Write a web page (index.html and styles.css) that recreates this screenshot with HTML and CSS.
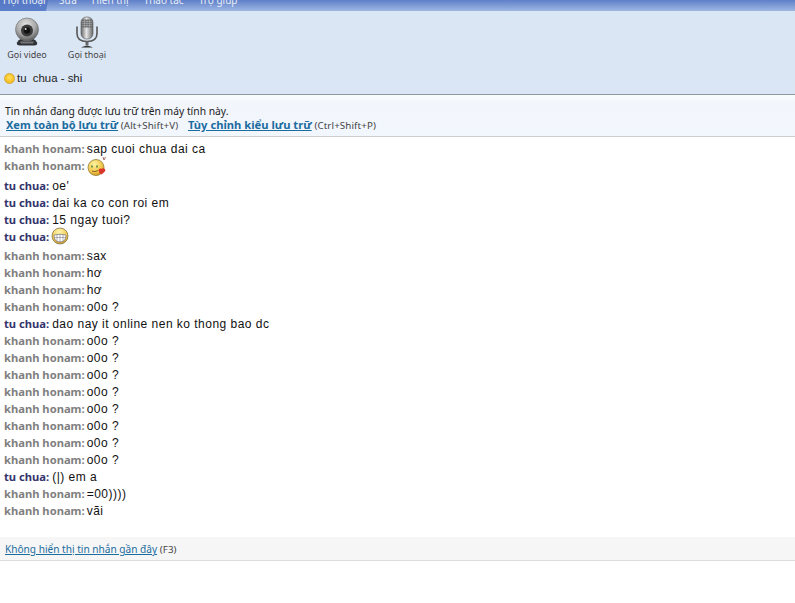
FILE: index.html
```html
<!DOCTYPE html>
<html lang="vi">
<head>
<meta charset="utf-8">
<title>Hội thoại</title>
<link rel="stylesheet" href="styles.css">
</head>
<body>
<nav class="menu">
  <span class="menu-item active">Hội thoại</span>
  <span class="menu-item">Sửa</span>
  <span class="menu-item">Hiển thị</span>
  <span class="menu-item">Thao tác</span>
  <span class="menu-item">Trợ giúp</span>
</nav>
<header class="toolbar">
  <div class="tools">
    <div class="tool tool-video">
      <svg class="tool-icon" width="30" height="32" viewBox="0 0 30 32">
        <defs>
          <radialGradient id="cam" cx="45%" cy="30%" r="70%"><stop offset="0" stop-color="#e4e4e4"/><stop offset="0.6" stop-color="#a8a8a8"/><stop offset="1" stop-color="#5c5c5c"/></radialGradient>
        </defs>
        <path d="M5 26 Q8 21 15 21 Q22 21 25 26 Q26 29 22 29 L8 29 Q4 29 5 26Z" fill="#2f3336"/>
        <path d="M8 25 L22 25 L21 27 L9 27Z" fill="#777"/>
        <circle cx="15" cy="13" r="11.5" fill="url(#cam)" stroke="#6d6d6d" stroke-width=".6"/>
        <circle cx="15" cy="14" r="6" fill="#3a3a3a"/>
        <circle cx="15" cy="14" r="3.2" fill="#111"/>
        <circle cx="13.6" cy="12.6" r="1" fill="#ddd"/>
      </svg>
      <span>Gọi video</span>
    </div>
    <div class="tool tool-voice">
      <svg class="tool-icon" width="24" height="32" viewBox="0 0 24 32">
        <defs>
          <linearGradient id="mic" x1="0" x2="1" y1="0" y2="0"><stop offset="0" stop-color="#666"/><stop offset=".45" stop-color="#e6e6e6"/><stop offset="1" stop-color="#666"/></linearGradient>
        </defs>
        <path d="M2 10 L2 17 Q2 25 12 25 Q22 25 22 17 L22 10" fill="none" stroke="#555" stroke-width="1.6"/>
        <rect x="6" y="0.500" width="12" height="22" rx="5.5" fill="url(#mic)" stroke="#555" stroke-width=".6"/>
        <rect x="7" y="3" width="10" height="8" fill="#6c6e70"/>
        <path d="M7 5 H17 M7 7 H17 M7 9 H17 M9.500 3 V11 M12 3 V11 M14.500 3 V11" stroke="#b4b4b4" stroke-width=".5"/>
        <rect x="10.500" y="25" width="3" height="4" fill="#666"/>
        <path d="M6 31 Q12 27.500 18 31 Z" fill="#333"/>
      </svg>
      <span>Gọi thoại</span>
    </div>
  </div>
  <div class="contact">
    <span class="status-dot"></span>
    <span>tu&nbsp; chua - shi</span>
  </div>
</header>
<section class="notice">
  <p class="notice-line">Tin nhắn đang được lưu trữ trên máy tính này.</p>
  <p class="notice-links">
    <a class="strong-link" href="#">Xem toàn bộ lưu trữ</a> <span class="hint">(Alt+Shift+V)</span>
    <a class="strong-link second" href="#">Tùy chỉnh kiểu lưu trữ</a> <span class="hint">(Ctrl+Shift+P)</span>
  </p>
</section>
<main class="log">
  <div class="msg"><b class="me">khanh honam:</b> <span>sap cuoi chua dai ca</span></div>
  <div class="msg tall-a"><b class="me">khanh honam:</b>
    <svg class="emo" width="20" height="21" viewBox="0 0 20 21">
      <defs><radialGradient id="face" cx="40%" cy="30%" r="70%"><stop offset="0" stop-color="#fdf3a0"/><stop offset=".7" stop-color="#f2c64a"/><stop offset="1" stop-color="#d49a22"/></radialGradient></defs>
      <circle cx="9" cy="11.500" r="8" fill="url(#face)" stroke="#8f7a3a" stroke-width=".8"/>
      <path d="M5 9.500 v2 M10 9.500 v2" stroke="#3d7a2e" stroke-width="1.4"/>
      <path d="M5 15 Q8 16.500 11 14.500" fill="none" stroke="#6b4a1a" stroke-width=".8"/>
      <path d="M11.500 14.500 Q12 11.500 14.500 12.800 Q17.500 11.500 18.500 14 Q18 16.500 14.500 18.500 Q11.500 16.500 11.500 14.500Z" fill="#d9362b"/>
      <path d="M16 1 L17 4 L18.500 1" fill="none" stroke="#8a3a2a" stroke-width=".7"/>
    </svg>
  </div>
  <div class="msg"><b class="you">tu chua:</b> <span>oe'</span></div>
  <div class="msg"><b class="you">tu chua:</b> <span>dai ka co con roi em</span></div>
  <div class="msg"><b class="you">tu chua:</b> <span>15 ngay tuoi?</span></div>
  <div class="msg tall-b"><b class="you">tu chua:</b>
    <svg class="emo" width="18" height="18" viewBox="0 0 18 18">
      <defs><radialGradient id="face2" cx="45%" cy="25%" r="75%"><stop offset="0" stop-color="#fdf5b0"/><stop offset=".7" stop-color="#f0c850"/><stop offset="1" stop-color="#cfa030"/></radialGradient></defs>
      <circle cx="9" cy="9" r="8" fill="url(#face2)" stroke="#85764a" stroke-width=".8"/>
      <path d="M3 8 Q9 6.500 15 8 Q15 15 9 15 Q3 15 3 8Z" fill="#fff" stroke="#5a5a6a" stroke-width=".6"/>
      <path d="M3.500 10.500 H14.500 M6 7.500 V14.500 M9 7.200 V15 M12 7.500 V14.500" stroke="#6a6a7a" stroke-width=".5"/>
    </svg>
  </div>
  <div class="msg"><b class="me">khanh honam:</b> <span>sax</span></div>
  <div class="msg"><b class="me">khanh honam:</b> <span>hơ</span></div>
  <div class="msg"><b class="me">khanh honam:</b> <span>hơ</span></div>
  <div class="msg"><b class="me">khanh honam:</b> <span>o0o ?</span></div>
  <div class="msg"><b class="you">tu chua:</b> <span>dao nay it online nen ko thong bao dc</span></div>
  <div class="msg"><b class="me">khanh honam:</b> <span>o0o ?</span></div>
  <div class="msg"><b class="me">khanh honam:</b> <span>o0o ?</span></div>
  <div class="msg"><b class="me">khanh honam:</b> <span>o0o ?</span></div>
  <div class="msg"><b class="me">khanh honam:</b> <span>o0o ?</span></div>
  <div class="msg"><b class="me">khanh honam:</b> <span>o0o ?</span></div>
  <div class="msg"><b class="me">khanh honam:</b> <span>o0o ?</span></div>
  <div class="msg"><b class="me">khanh honam:</b> <span>o0o ?</span></div>
  <div class="msg"><b class="me">khanh honam:</b> <span>o0o ?</span></div>
  <div class="msg"><b class="you">tu chua:</b> <span>(|) em a</span></div>
  <div class="msg"><b class="me">khanh honam:</b> <span>=00))))</span></div>
  <div class="msg"><b class="me">khanh honam:</b> <span>vãi</span></div>
</main>
<footer class="recent">
  <a class="plain-link" href="#">Không hiển thị tin nhắn gần đây</a> <span class="hint">(F3)</span>
</footer>
</body>
</html>
```
FILE: styles.css
```css
* { box-sizing: border-box; }
html, body { margin: 0; padding: 0; }
body {
  width: 795px;
  height: 603px;
  overflow: hidden;
  background: #fff;
  font-family: "DejaVu Sans", sans-serif;
  font-size: 10px;
  color: #222;
}
p { margin: 0; }

.menu {
  height: 11px;
  display: flex;
  align-items: flex-end;
  overflow: hidden;
  background: linear-gradient(#5f7fc9, #9db7e2);
  font-family: "Noto Sans", sans-serif;
  font-size: 10px;
  color: #e6edf8;
}
.menu-item {
  flex: none;
  line-height: 16px;
  padding: 0 0 3px 0;
  margin-right: 15px;
}
.menu-item.active {
  width: 50px;
  height: 19px;
  padding: 0 0 3px 3px;
  margin-right: 9px;
  background: linear-gradient(#4e6fbe, #5d80cb);
  clip-path: polygon(0 0, 100% 0, 92% 100%, 0 100%);
}

.toolbar {
  height: 84px;
  background: linear-gradient(#d8e7f3 0, #dbe6f4 12px, #dae6f5 100%);
  border-bottom: 1px solid #8c9a9c;
  padding-top: 5px;
}
.tools { display: flex; height: 49px; }
.tool {
  display: flex;
  flex-direction: column;
  align-items: center;
  font-family: "Noto Sans", sans-serif;
  font-size: 9px;
  line-height: 12px;
  color: #444;
}
.tool-icon { display: block; height: 33px; }
.tool-video { width: 54px; }
.tool-voice { width: 66px; }
.contact {
  display: flex;
  align-items: center;
  gap: 2px;
  padding: 6px 0 0 4px;
  font-family: "Liberation Sans", sans-serif;
  font-size: 11.4px;
  line-height: 15px;
  color: #222;
}
.status-dot {
  width: 11px;
  height: 11px;
  border-radius: 50%;
  background: radial-gradient(circle at 50% 40%, #ffdf55, #f2b010);
  border: 1px solid #d6a63a;
}

.notice {
  height: 42px;
  padding: 10px 0 0 5px;
  background: linear-gradient(#fafdfc 0, #f2f6fc 8px, #f2f6fd 100%);
  border-bottom: 1px solid #cbcdd1;
  font-family: "Noto Sans", sans-serif;
  font-size: 10.3px;
  line-height: 12px;
}
.notice-links { line-height: 15px; padding-left: 1px; white-space: nowrap; }
.strong-link {
  color: #1b6c9f;
  font-weight: bold;
  font-size: 11px;
}
.strong-link.second { margin-left: 7px; font-size: 11.2px; }
.hint { font-size: 9.8px; color: #444; letter-spacing: .1px; }

.log {
  height: 400px;
  padding-top: 3px;
}
.msg {
  height: 17px;
  line-height: 17px;
  padding-left: 4px;
  white-space: nowrap;
  font-family: "Liberation Sans", sans-serif;
  font-size: 12px;
  letter-spacing: .48px;
  color: #111;
  display: flex;
  align-items: center;
  gap: 2px;
}
.msg span { margin-top: 2px; }
.msg .you + span { margin-left: 1px; }
.msg b {
  font-family: "Noto Sans", sans-serif;
  font-size: 11.2px;
  letter-spacing: 0;
}
.me { color: #7f7f7f; }
.you { color: #34346c; }
.tall-a { height: 20px; align-items: flex-start; }
.tall-b { height: 19px; align-items: flex-start; }
.emo { display: block; flex: none; margin-top: -1px; }

.recent {
  height: 24px;
  padding: 5px 0 0 5px;
  background: #f6f6f6;
  border-bottom: 1px solid #dcdcdc;
  font-family: "Noto Sans", sans-serif;
  font-size: 10.1px;
  line-height: 14px;
}
.plain-link { color: #1b6c9f; }
```
